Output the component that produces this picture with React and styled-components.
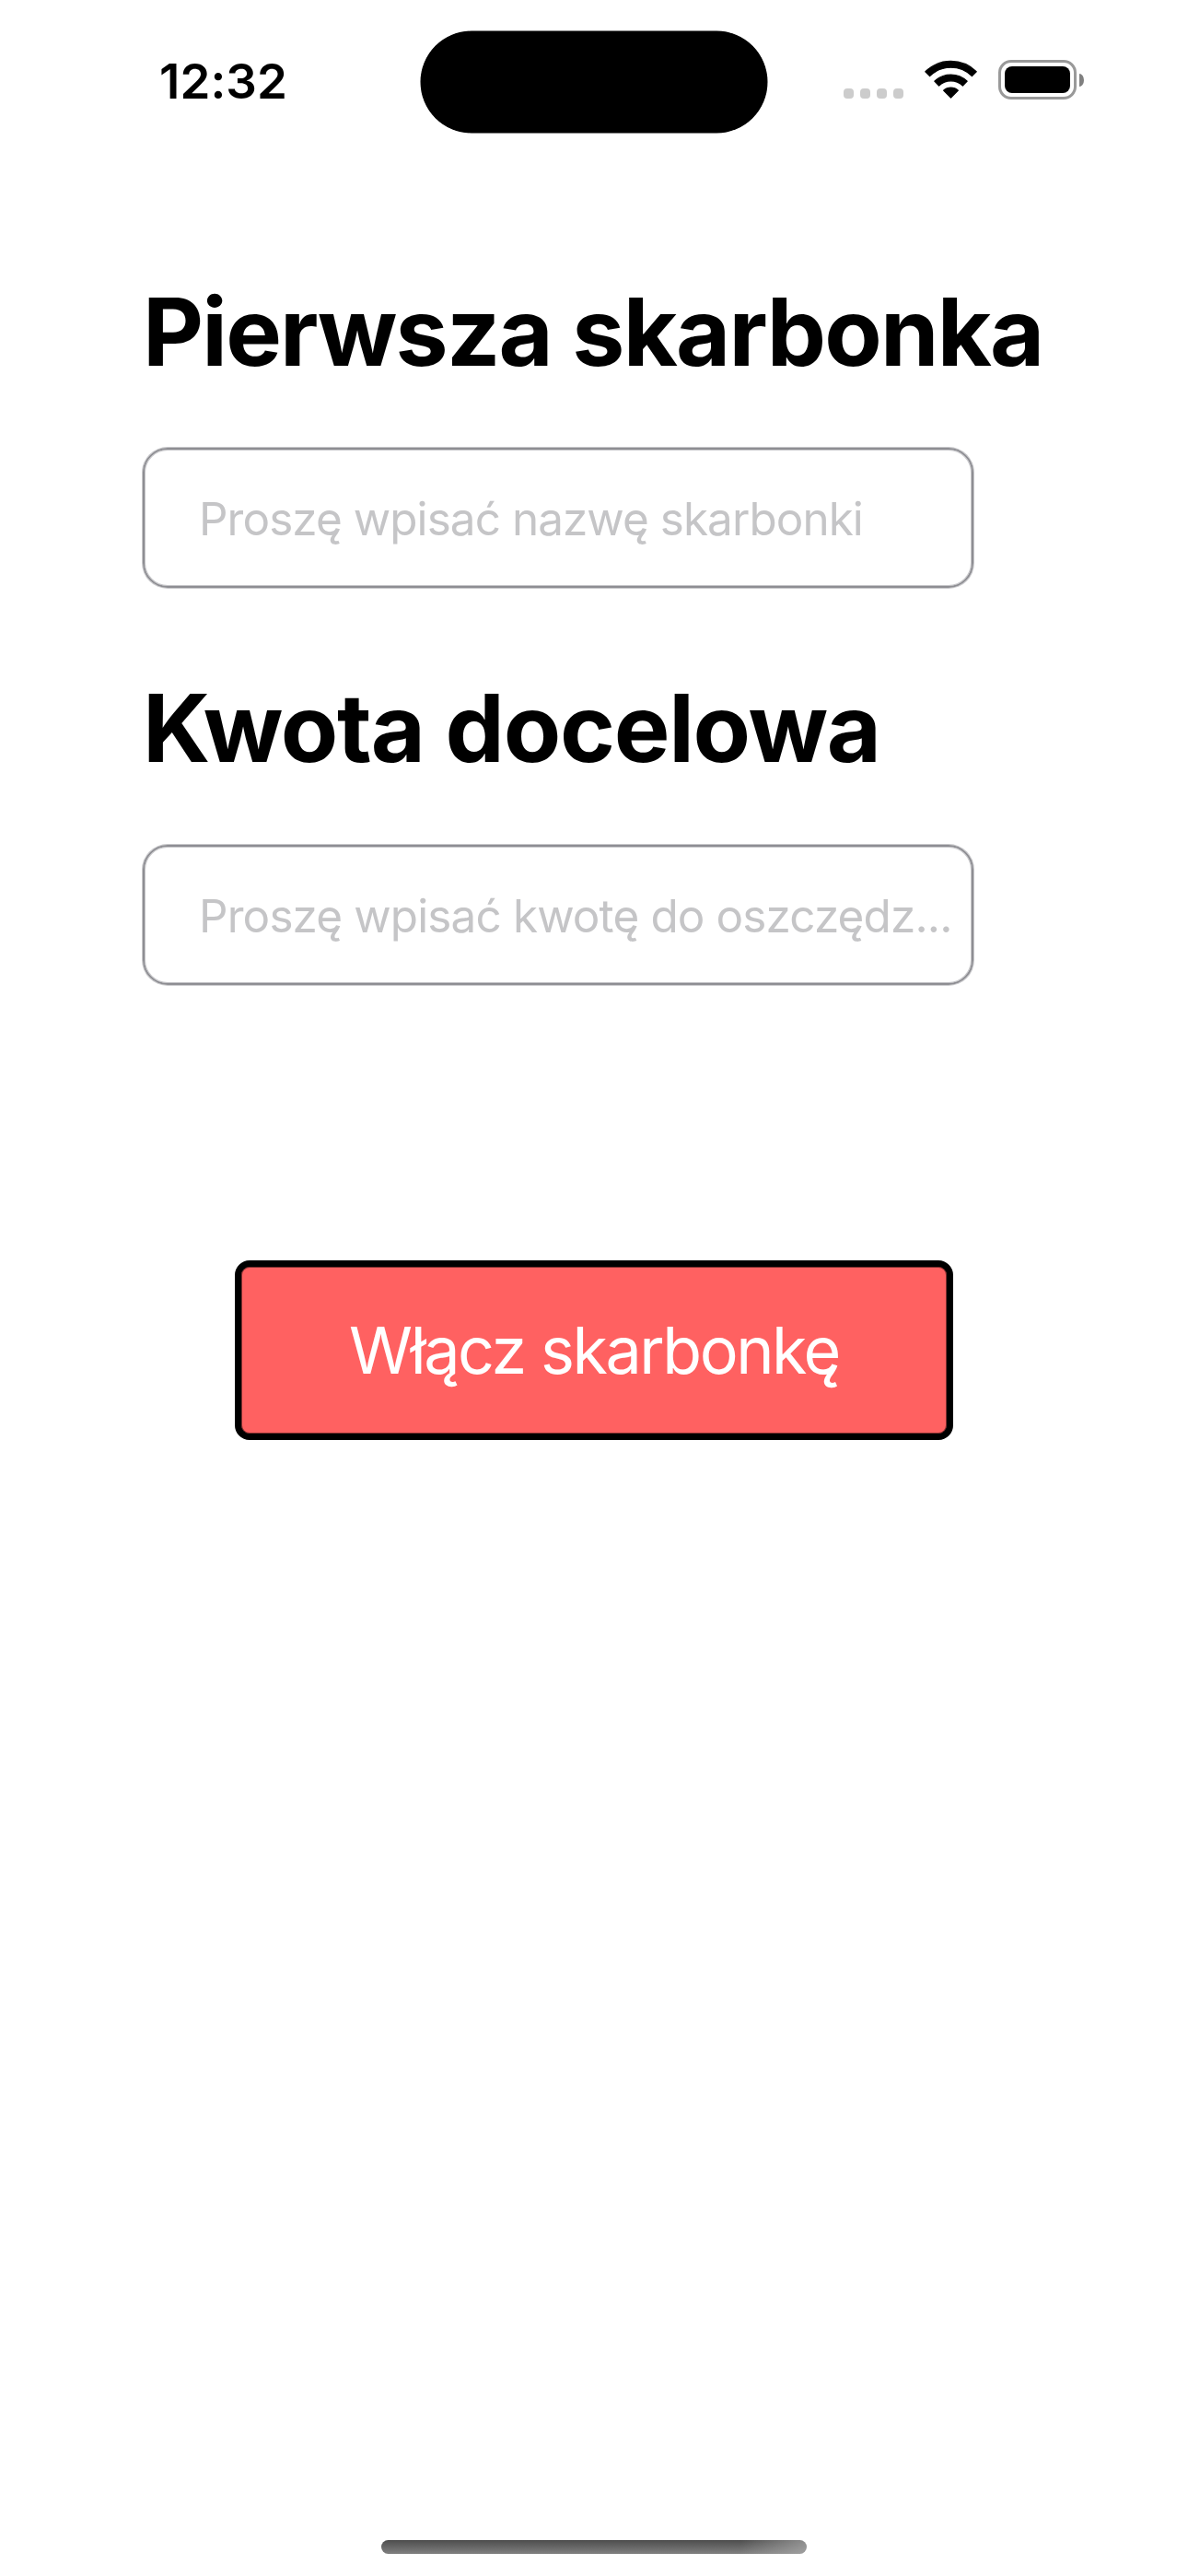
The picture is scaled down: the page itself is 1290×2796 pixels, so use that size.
import React from "react";
import styled, { createGlobalStyle } from "styled-components";

const GlobalStyle = createGlobalStyle`
  * { box-sizing: border-box; }
  html, body { margin: 0; padding: 0; background: #fff; }
`;

const Screen = styled.div`
  display: flex;
  flex-direction: column;
  width: 1290px;
  height: 2796px;
  overflow: hidden;
  background: #fff;
  color: #000;
  font-family: Inter, "Liberation Sans", sans-serif;
`;

const StatusBar = styled.header`
  display: grid;
  grid-template-columns: 457px 376px 1fr;
  align-items: center;
  height: 177px;
`;

const Clock = styled.time`
  padding: 0 0 1px 173px;
  font-size: 52.8px;
  font-weight: 600;
  line-height: 64px;
  letter-spacing: 0.1px;
`;

const Island = styled.div`
  height: 110px;
  border-radius: 55px;
  background: #000;
  box-shadow: 0 0 0 0.5px #000;
`;

const Indicators = styled.div`
  display: flex;
  align-items: flex-end;
  height: 43px;
  margin-top: -4px;
  padding-left: 83px;
`;

const Signal = styled.div`
  display: flex;
  gap: 7px;
  padding-bottom: 1px;
`;

const SignalDot = styled.i`
  width: 11px;
  height: 11px;
  border-radius: 4px;
  background: #ccc;
`;

const WifiIcon = styled.svg`
  display: block;
  width: 57px;
  height: 43px;
  margin-left: 23px;
`;

const Battery = styled.div`
  display: flex;
  align-items: center;
  gap: 3px;
  margin-left: 23px;
`;

const BatteryCase = styled.div`
  width: 85px;
  height: 43px;
  padding: 4px;
  border: 3px solid #999;
  border-radius: 14px;
`;

const BatteryLevel = styled.div`
  height: 29px;
  border-radius: 8px;
  background: #000;
`;

const BatteryTip = styled.div`
  width: 5px;
  height: 14px;
  border-radius: 0 5px 5px 0 / 0 7px 7px 0;
  background: #808080;
`;

const Form = styled.main`
  display: flex;
  flex: 1;
  flex-direction: column;
  padding: 121px 0 0 155px;
`;

const Group = styled.section`
  display: flex;
  flex-direction: column;
  gap: ${(p) => p.$gap}px;
  margin-bottom: ${(p) => p.$after}px;
`;

const Title = styled.h1`
  margin: 0;
  font-size: 102px;
  font-weight: 700;
  line-height: 124px;
  letter-spacing: ${(p) => p.$tracking}px;
  white-space: nowrap;
`;

const Field = styled.label`
  display: flex;
  align-items: center;
  width: 902px;
  height: 152px;
  padding: 2px 0 0 59px;
  border: 2px solid #8e8e93;
  border-radius: 27px;
  box-shadow: 0 0 0 1px #8e8e9380, inset 0 0 0 1px #8e8e9380;
`;

const Placeholder = styled.span`
  color: #c5c5c7;
  font-size: 49.4px;
  line-height: 60px;
  letter-spacing: ${(p) => p.$tracking}px;
  white-space: nowrap;
`;

const SubmitButton = styled.button`
  width: 780px;
  height: 195px;
  margin: 0 0 0 100px;
  padding: 1px 0 0;
  border: 7px solid #000;
  border-radius: 16px;
  background: #ff6161;
  box-shadow: inset 0 0 0 1px #802f2f;
  color: #fff;
  font-family: inherit;
  font-size: 70px;
  font-weight: 400;
  line-height: 84px;
  letter-spacing: -2.45px;
`;

const HomeBar = styled.footer`
  width: 462px;
  height: 15px;
  margin: 0 auto 24px;
  border-radius: 8px;
  background:
    linear-gradient(100deg, transparent 84%, #b0b0b0aa 100%),
    linear-gradient(#4d4d4d, #808080);
`;

function Wifi() {
  return (
    <WifiIcon viewBox="0 0 57 43" aria-hidden="true">
      <g stroke="#000" strokeWidth="1.2" strokeLinejoin="round">
        <path d="M.8 12.8A39.5 39.5 0 0 1 56.2 12.8L51.4 17.6A32.5 32.5 0 0 0 5.6 17.6Z" />
        <path d="M10.8 23.2A25.4 25.4 0 0 1 46.2 23.2L41.4 28A18.6 18.6 0 0 0 15.6 28Z" />
        <path d="M20.6 33.2A11.6 11.6 0 0 1 36.4 33.2L28.5 41.1Z" />
      </g>
    </WifiIcon>
  );
}

export default function App() {
  return (
    <>
      <GlobalStyle />
      <Screen>
        <StatusBar>
          <Clock>12:32</Clock>
          <Island />
          <Indicators>
            <Signal>
              {[0, 1, 2, 3].map((n) => (
                <SignalDot key={n} />
              ))}
            </Signal>
            <Wifi />
            <Battery>
              <BatteryCase>
                <BatteryLevel />
              </BatteryCase>
              <BatteryTip />
            </Battery>
          </Indicators>
        </StatusBar>
        <Form>
          <Group $gap={64} $after={90}>
            <Title $tracking={-1.8}>Pierwsza skarbonka</Title>
            <Field>
              <Placeholder $tracking={-0.92}>Proszę wpisać nazwę skarbonki</Placeholder>
            </Field>
          </Group>
          <Group $gap={65} $after={299}>
            <Title as="h2" $tracking={-1.25}>Kwota docelowa</Title>
            <Field>
              <Placeholder $tracking={-0.85}>Proszę wpisać kwotę do oszczędz...</Placeholder>
            </Field>
          </Group>
          <SubmitButton type="button">Włącz skarbonkę</SubmitButton>
        </Form>
        <HomeBar />
      </Screen>
    </>
  );
}
